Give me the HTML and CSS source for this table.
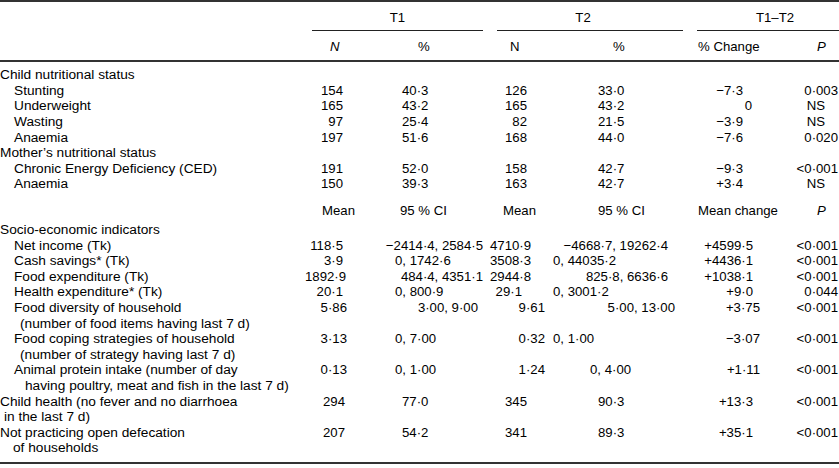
FILE: index.html
```html
<!DOCTYPE html>
<html lang="en">
<head>
<meta charset="utf-8">
<title>Table</title>
<link rel="stylesheet" href="styles.css">
</head>
<body>
<table class="data">
  <colgroup>
    <col class="w-lab"><col class="w-b"><col class="w-c"><col class="w-d"><col class="w-e"><col class="w-f"><col class="w-g">
  </colgroup>
  <thead>
    <tr class="grp-row">
      <th></th>
      <th colspan="2" class="grp"><span class="rule">T1</span></th>
      <th colspan="2" class="grp"><span class="rule rule-t2">T2</span></th>
      <th colspan="2" class="grp"><span class="rule rule-end">T1–T2</span></th>
    </tr>
    <tr class="col-row">
      <th></th>
      <th class="hb"><i>N</i></th>
      <th class="hc">%</th>
      <th class="hd">N</th>
      <th class="he">%</th>
      <th class="hf">% Change</th>
      <th class="hg"><i>P</i></th>
    </tr>
  </thead>
  <tbody>
    <tr class="first"><td class="sec">Child nutritional status</td><td></td><td></td><td></td><td></td><td></td><td></td></tr>
    <tr><td class="item">Stunting</td><td class="b">154</td><td class="c">40·3</td><td class="d">126</td><td class="e">33·0</td><td class="f">−7·3</td><td class="g">0·003</td></tr>
    <tr><td class="item">Underweight</td><td class="b">165</td><td class="c">43·2</td><td class="d">165</td><td class="e">43·2</td><td class="f-zero">0</td><td class="g-ns">NS</td></tr>
    <tr><td class="item">Wasting</td><td class="b">97</td><td class="c">25·4</td><td class="d">82</td><td class="e">21·5</td><td class="f">−3·9</td><td class="g-ns">NS</td></tr>
    <tr><td class="item">Anaemia</td><td class="b">197</td><td class="c">51·6</td><td class="d">168</td><td class="e">44·0</td><td class="f">−7·6</td><td class="g">0·020</td></tr>
    <tr><td class="sec">Mother’s nutritional status</td><td></td><td></td><td></td><td></td><td></td><td></td></tr>
    <tr><td class="item">Chronic Energy Deficiency (CED)</td><td class="b">191</td><td class="c">52·0</td><td class="d">158</td><td class="e">42·7</td><td class="f">−9·3</td><td class="g">&lt;0·001</td></tr>
    <tr><td class="item">Anaemia</td><td class="b">150</td><td class="c">39·3</td><td class="d">163</td><td class="e">42·7</td><td class="f">+3·4</td><td class="g-ns">NS</td></tr>
    <tr class="sub"><td></td><td class="hb-mean">Mean</td><td class="hc-ci">95 % CI</td><td class="hd-mean">Mean</td><td class="e">95 % CI</td><td class="hf">Mean change</td><td class="hg"><i>P</i></td></tr>
    <tr><td class="sec">Socio-economic indicators</td><td></td><td></td><td></td><td></td><td></td><td></td></tr>
    <tr><td class="item">Net income (Tk)</td><td class="b">118·5</td><td class="c-wide">−2414·4, 2584·5</td><td class="d-m1">4710·9</td><td class="e-wide">−4668·7, 19262·4</td><td class="f-m1">+4599·5</td><td class="g">&lt;0·001</td></tr>
    <tr><td class="item">Cash savings* (Tk)</td><td class="b">3·9</td><td class="c-zero">0, 1742·6</td><td class="d-m1">3508·3</td><td class="e-zero">0, 44035·2</td><td class="f-m1">+4436·1</td><td class="g">&lt;0·001</td></tr>
    <tr><td class="item">Food expenditure (Tk)</td><td class="b">1892·9</td><td class="c-wide">484·4, 4351·1</td><td class="d-m1">2944·8</td><td class="e-wide">825·8, 6636·6</td><td class="f-m1">+1038·1</td><td class="g">&lt;0·001</td></tr>
    <tr><td class="item">Health expenditure* (Tk)</td><td class="b">20·1</td><td class="c-zero">0, 800·9</td><td class="d-m1">29·1</td><td class="e-zero">0, 3001·2</td><td class="f-m1">+9·0</td><td class="g">0·044</td></tr>
    <tr><td class="item">Food diversity of household<span class="cont">(number of food items having last 7 d)</span></td><td class="b-m2">5·86</td><td class="c-mid">3·00, 9·00</td><td class="d-m2">9·61</td><td class="e-mid">5·00, 13·00</td><td class="f-m2">+3·75</td><td class="g">&lt;0·001</td></tr>
    <tr><td class="item">Food coping strategies of household<span class="cont">(number of strategy having last 7 d)</span></td><td class="b-m2">3·13</td><td class="c-zero">0, 7·00</td><td class="d-m2">0·32</td><td class="e-zero">0, 1·00</td><td class="f-m2">−3·07</td><td class="g">&lt;0·001</td></tr>
    <tr><td class="item">Animal protein intake (number of day<span class="cont-deep">having poultry, meat and fish in the last 7 d)</span></td><td class="b-m2">0·13</td><td class="c-zero">0, 1·00</td><td class="d-m2">1·24</td><td class="e-short">0, 4·00</td><td class="f-m2">+1·11</td><td class="g">&lt;0·001</td></tr>
    <tr><td class="sec">Child health (no fever and no diarrhoea<span class="cont-top">in the last 7 d)</span></td><td class="b-top">294</td><td class="c">77·0</td><td class="d">345</td><td class="e">90·3</td><td class="f-m1">+13·3</td><td class="g">&lt;0·001</td></tr>
    <tr class="last"><td class="sec">Not practicing open defecation<span class="cont-top2">of households</span></td><td class="b-top">207</td><td class="c">54·2</td><td class="d">341</td><td class="e">89·3</td><td class="f-m1">+35·1</td><td class="g">&lt;0·001</td></tr>
  </tbody>
</table>
</body>
</html>
```

FILE: styles.css
```css
html, body {
  margin: 0;
  padding: 0;
  background: #ffffff;
}

body {
  font-family: "Liberation Sans", Arial, Helvetica, sans-serif;
  font-size: 13.2px;
  color: #000000;
}

.data {
  width: 839px;
  table-layout: fixed;
  border-collapse: separate;
  border-spacing: 0;
  border-top: 2px solid #333333;
  border-bottom: 2px solid #333333;
}

.w-lab { width: 305px; }
.w-b { width: 55px; }
.w-c { width: 130px; }
.w-d { width: 58px; }
.w-e { width: 142px; }
.w-f { width: 100px; }
.w-g { width: 49px; }

th, td {
  padding: 0;
  line-height: 15.6px;
  vertical-align: top;
  font-weight: normal;
  text-align: left;
  white-space: nowrap;
}

/* header group row */
.grp-row th {
  padding-top: 8px;
}

.grp {
  text-align: center;
}

.rule {
  display: block;
  margin: 0 7px;
  padding-bottom: 4px;
  border-bottom: 1px solid #222222;
}

.rule-t2 {
  padding-right: 14px;
}

.rule-end {
  margin-right: 0;
  padding-left: 14px;
}

/* column heading row */
.col-row th {
  padding-top: 8.6px;
  padding-bottom: 4.8px;
  border-bottom: 2px solid #333333;
}

.hb { padding-left: 25px; }
.hc { padding-left: 58px; }
.hd { padding-left: 20px; }
.he { padding-left: 65px; }
.hf { padding-left: 8px; }
.hg { padding-left: 27px; }

.hb-mean { padding-left: 17px; }
.hc-ci { padding-left: 40px; }
.hd-mean { padding-left: 13px; }

/* body spacing */
.first td { padding-top: 5.6px; }

.sub td {
  padding-top: 10.7px;
  padding-bottom: 3.9px;
}

.last td { padding-bottom: 6.4px; }

/* labels */
.sec, .item { font-size: 13.7px; }
.sec { padding-left: 0; }
.item { padding-left: 14px; }

.cont { display: block; padding-left: 6px; }
.cont-deep { display: block; padding-left: 11px; }
.cont-top { display: block; padding-left: 4px; }
.cont-top2 { display: block; padding-left: 13px; }

/* T1 N / mean */
.b, .b-m2, .b-top { text-align: right; }
.b { padding-right: 17px; }
.b-m2 { padding-right: 13px; }
.b-top { padding-right: 15px; }

/* T1 % / CI */
.c { padding-left: 42px; }
.c-zero { padding-left: 35px; }
.c-wide { text-align: right; padding-right: 7px; }
.c-mid { text-align: right; padding-right: 12px; }

/* T2 N / mean */
.d, .d-m1, .d-m2 { text-align: right; }
.d { padding-right: 21px; }
.d-m1 { padding-right: 26px; }
.d-m2 { padding-right: 3px; }

/* T2 % / CI */
.e { padding-left: 50px; }
.e-zero { padding-left: 5px; }
.e-short { padding-left: 42px; }
.e-wide { text-align: right; padding-right: 22px; }
.e-mid { text-align: right; padding-right: 15px; }

/* change */
.f, .f-zero, .f-m1, .f-m2 { text-align: right; }
.f { padding-right: 47px; }
.f-zero { padding-right: 38px; }
.f-m1 { padding-right: 37px; }
.f-m2 { padding-right: 30px; }

/* P */
.g, .g-ns { text-align: right; }
.g { padding-right: 1px; }
.g-ns { padding-right: 14px; }
```
